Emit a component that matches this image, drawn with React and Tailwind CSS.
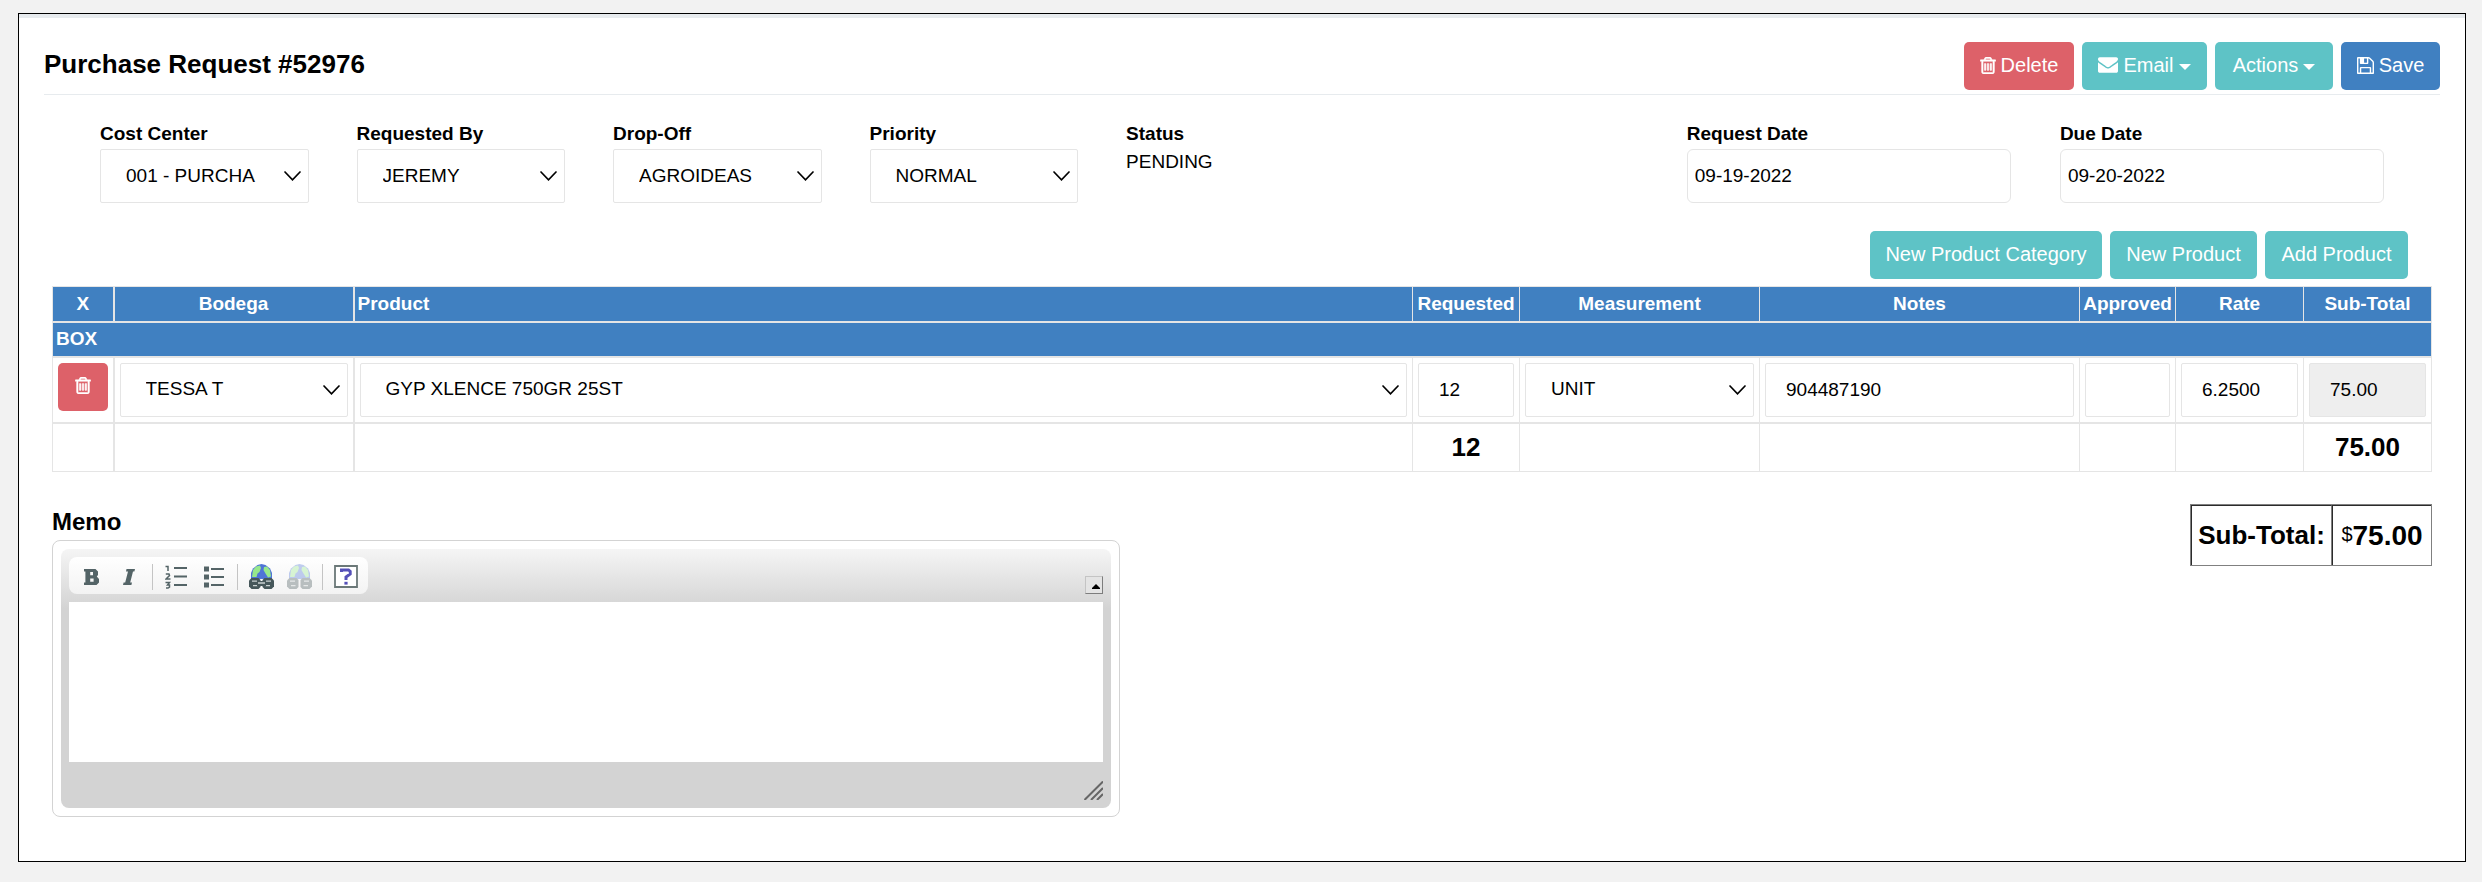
const input =
  "h-[54px] w-full min-w-0 rounded-[2px] border border-[#e5e5e5] bg-white px-[20px] text-[19px] text-black outline-none";
const button =
  "flex h-12 items-center justify-center rounded-[5px] pb-[2px] text-[20px] leading-6 text-white whitespace-nowrap";

function TrashIcon() {
  return (
    <svg viewBox="192 128 1408 1536" className="h-[17px] w-4" fill="currentColor" stroke="currentColor" strokeWidth="50" aria-hidden="true">
      <path d="M704 736v576q0 14-9 23t-23 9h-64q-14 0-23-9t-9-23v-576q0-14 9-23t23-9h64q14 0 23 9t9 23zm256 0v576q0 14-9 23t-23 9h-64q-14 0-23-9t-9-23v-576q0-14 9-23t23-9h64q14 0 23 9t9 23zm256 0v576q0 14-9 23t-23 9h-64q-14 0-23-9t-9-23v-576q0-14 9-23t23-9h64q14 0 23 9t9 23zm128 724v-948h-896v948q0 22 7 40.5t14.5 27 10.5 8.5h832q3 0 10.5-8.5t14.5-27 7-40.5zm-672-1076h448l-48-117q-7-9-17-11h-317q-10 2-17 11zm928 32v64q0 14-9 23t-23 9h-96v948q0 83-47 143.5t-113 60.5h-832q-66 0-113-58.5t-47-141.5v-952h-96q-14 0-23-9t-9-23v-64q0-14 9-23t23-9h309l70-167q15-37 54-63t79-26h320q40 0 79 26t54 63l70 167h309q14 0 23 9t9 23z" />
    </svg>
  );
}

function MailIcon() {
  return (
    <svg viewBox="0 256 1792 1408" className="h-4 w-5" fill="currentColor" aria-hidden="true">
      <path d="M1792 710v794q0 66-47 113t-113 47h-1472q-66 0-113-47t-47-113v-794q44 49 101 87 362 246 497 345 57 42 92.5 65.5t94.5 48 110 24.5h2q51 0 110-24.5t94.5-48 92.5-65.5q170-123 498-345 57-39 100-87zm0-294q0 79-49 151t-122 123q-376 261-468 325-10 7-42.5 31t-54 38.5-52 32.5-57.5 27-50 9h-2q-23 0-50-9t-57.5-27-52-32.5-54-38.5-42.5-31q-91-64-262-182.5t-205-142.5q-62-42-117-115.5t-55-136.5q0-78 41.5-130t118.5-52h1472q65 0 112.5 47t47.5 113z" />
    </svg>
  );
}

function SaveIcon() {
  return (
    <svg viewBox="128 128 1536 1536" className="size-[17px]" fill="currentColor" aria-hidden="true">
      <path d="M512 1536h768v-384h-768v384zm896 0h128v-896q0-14-10-38.5t-20-34.5l-281-281q-10-10-34-20t-39-10v416q0 40-28 68t-68 28h-576q-40 0-68-28t-28-68v-416h-128v1280h128v-416q0-40 28-68t68-28h832q40 0 68 28t28 68v416zm-384-928v-320q0-13-9.5-22.5t-22.5-9.5h-192q-13 0-22.5 9.5t-9.5 22.5v320q0 13 9.5 22.5t22.5 9.5h192q13 0 22.5-9.5t9.5-22.5zm640 32v928q0 40-28 68t-68 28h-1344q-40 0-68-28t-28-68v-1344q0-40 28-68t68-28h928q40 0 88 20t76 48l280 280q28 28 48 76t20 88z" />
    </svg>
  );
}

function Caret() {
  return (
    <svg viewBox="0 0 12 6" className="mt-1 h-[6px] w-3" fill="currentColor" aria-hidden="true">
      <path d="M0 0H12L6 6Z" />
    </svg>
  );
}

function Select({ id, label, value }) {
  return (
    <div className="grid items-center">
      <select
        id={id}
        aria-label={label}
        defaultValue={value}
        className="col-start-1 row-start-1 h-[54px] w-full min-w-0 appearance-none rounded-[2px] border border-[#e5e5e5] bg-white pr-10 pl-[25px] text-[19px] text-black"
      >
        <option>{value}</option>
      </select>
      <svg viewBox="0 0 17 10" className="pointer-events-none col-start-1 row-start-1 mr-[8px] h-[10px] w-[17px] justify-self-end" fill="none" stroke="#000" strokeWidth="1.7" strokeLinecap="round" aria-hidden="true">
        <path d="M1 1L8.500 8.800L16 1" />
      </svg>
    </div>
  );
}

function SelectField({ id, label, value }) {
  return (
    <div className="px-6">
      <label htmlFor={id} className="block pb-[2px] text-[19px] leading-[26px] font-bold">{label}</label>
      <Select id={id} value={value} />
    </div>
  );
}

function DateField({ id, label, value }) {
  return (
    <div className="pr-6 pl-[25px]">
      <label htmlFor={id} className="block pb-[2px] text-[19px] leading-[26px] font-bold">{label}</label>
      <input id={id} defaultValue={value} className="h-[54px] w-full min-w-0 rounded-md border border-[#e5e5e5] bg-white px-[7px] text-[19px] text-black" />
    </div>
  );
}

const tool = "flex h-7 w-[38px] items-center justify-center";

function Separator() {
  return <span className="mx-1 h-[26px] w-px bg-[#c4c4c4]" />;
}

function Globe({ broken }) {
  return (
    <svg viewBox="0 0 25 25" className={broken ? "size-[25px] opacity-35" : "size-[25px]"} aria-hidden="true">
      <path d="M2 15V9L4 4.500L8.500 1L12.500 0L16.500 1L21 4.500L23 9V15Z" fill="#4f74d6" />
      <path d="M4 6L7 2.500L11 1.500L12 4L10.500 8L8.500 9.500L7.500 13H3Z" fill="#97e88c" />
      <path d="M15 3L18 2.500L21 6L22 12.500L19 13.500L16.500 9.500L14.500 6Z" fill="#97e88c" />
      <path d="M2.500 14H9.500L11.500 16V23L9.500 25H2.500L0 22.500V16.500Z" fill="#46575a" />
      <path d="M22.500 14H15.500L13.500 16V23L15.500 25H22.500L25 22.500V16.500Z" fill="#46575a" />
      <path d="M3 17.200H8M17 17.200H22M4 21.700H8.500M16.500 21.700H21" stroke="#c9d1d1" strokeWidth="1.200" />
      {!broken && <path d="M8 19.500H17" stroke="#46575a" strokeWidth="5" />}
      {!broken && <path d="M9 19H16" stroke="#dfe5e5" strokeWidth="1.300" />}
    </svg>
  );
}

function Editor() {
  return (
    <div className="w-full max-w-[1068px] rounded-lg border border-[#d3d3d3] p-2">
      <div className="rounded-lg bg-[#d3d3d3] bg-[linear-gradient(#f5f5f5,#d3d3d3_60px)] p-2">
        <div className="flex items-end justify-between pb-2">
          <div className="flex h-[37px] items-center rounded-lg bg-linear-to-b from-white to-[#f3f3f3] px-[3px] pt-[2px]">
            <button type="button" aria-label="Bold" className={tool}>
              <svg viewBox="0 0 15 16" className="h-4 w-[15px]" fill="#546467" fillRule="evenodd" aria-hidden="true">
                <path d="M0 0H11.500L14 2.500V6L12.800 7.600L15 10V13.500L12.500 16H0V13.400H1.400V2.600H0ZM6.200 3V6.200H9V3ZM6.200 9.400V12.800H9.600V9.400Z" />
              </svg>
            </button>
            <button type="button" aria-label="Italic" className={tool}>
              <svg viewBox="0 0 12 16" className="h-4 w-3" fill="#546467" aria-hidden="true">
                <path d="M3.500 0H12L11.400 2.400H10L7.200 13.600H9L8.400 16H0L.6 13.600H2.200L5 2.400H3Z" />
              </svg>
            </button>
            <Separator />
            <button type="button" aria-label="Numbered list" className={tool}>
              <svg viewBox="0 0 22 24" className="h-6 w-[22px]" fill="none" stroke="#546467" aria-hidden="true">
                <path d="M9 3H22M9 11.500H22M9 20H22" strokeWidth="2" />
                <path d="M.5 1.500H3V6M.8 9H4L4.500 10.500L1 14H5.500M.5 17.500H4.500L2.500 20H4.500V22L3 23H1" strokeWidth="1.500" />
              </svg>
            </button>
            <button type="button" aria-label="Bulleted list" className={tool}>
              <svg viewBox="0 0 20 22" className="h-[22px] w-5" fill="#546467" aria-hidden="true">
                <path d="M0 .5H5V5.500H0ZM0 8.500H5V13.500H0ZM0 16.500H5V21.500H0ZM7 2H20V4H7ZM7 10H20V12H7ZM7 18H20V20H7Z" />
              </svg>
            </button>
            <Separator />
            <button type="button" aria-label="Link" className={tool}><Globe /></button>
            <button type="button" aria-label="Unlink" className={tool}><Globe broken /></button>
            <Separator />
            <button type="button" aria-label="About" className={tool}>
              <svg viewBox="0 0 24 23" className="h-[23px] w-6" fill="none" aria-hidden="true">
                <path d="M1 1H23V22H1Z" fill="#fff" stroke="#6b7878" strokeWidth="1.800" />
                <path d="M7.500 7V5H14.500L16.200 6.500V9L12 12V15" stroke="#5550b8" strokeWidth="3" />
                <path d="M10.400 16.800H13.600V19.600H10.400Z" fill="#5550b8" />
              </svg>
            </button>
          </div>
          <button type="button" aria-label="Collapse toolbar" className="flex size-[18px] items-end justify-end border border-t-[#c4c4c4] border-r-[#7d7d7d] border-b-[#7d7d7d] border-l-[#c4c4c4] bg-[#e4e4e4] pr-[2px] pb-1">
            <svg viewBox="0 0 8 5" className="h-[5px] w-2" fill="#000" aria-hidden="true"><path d="M4 0L8 4V5H0V4Z" /></svg>
          </button>
        </div>
        <textarea id="memo" className="block h-40 w-full resize-none bg-white p-3 text-[19px] outline-none" />
        <div className="flex h-[38px] items-end justify-end">
          <svg viewBox="0 0 19 19" className="size-[19px]" fill="none" stroke="#666" strokeWidth="2" aria-hidden="true">
            <path d="M.5 19L19 .5M7 19L19 7M13 19L19 13" />
          </svg>
        </div>
      </div>
    </div>
  );
}

const head = "border border-b-2 border-[#e5e5e5] px-0 text-center";
const cell = "border border-y-2 border-[#e5e5e5] p-[5px] align-top";

export default function App() {
  return (
    <div className="min-h-screen bg-[#f2f2f2] pt-[13px] pr-4 pb-4 pl-[18px] font-['Liberation_Sans',Arial,sans-serif] text-[19px] text-black">
      <main className="border border-black bg-white">
        <div className="h-1 bg-[#e7ebee]" />
        <header className="mx-[25px] flex justify-between border-b border-[#e7ebee] pt-6 pb-1">
          <h1 className="pt-[6px] text-[26px] leading-8 font-bold">Purchase Request #52976</h1>
          <div className="flex gap-2">
            <button type="button" className={`${button} w-[110px] gap-[5px] bg-[#dd6169]`}><TrashIcon />Delete</button>
            <button type="button" className={`${button} w-[125px] gap-[5px] bg-[#5ec3c6]`}><MailIcon />Email<Caret /></button>
            <button type="button" className={`${button} w-[118px] gap-[5px] bg-[#5ec3c6]`}>Actions<Caret /></button>
            <button type="button" className={`${button} w-[99px] gap-[5px] bg-[#4080c1]`}><SaveIcon />Save</button>
          </div>
        </header>

        <section className="mx-[57px] grid grid-cols-[11fr_11fr_11fr_11fr_24fr_16fr_16fr] pt-[26px]">
          <SelectField id="cost-center" label="Cost Center" value="001 - PURCHA" />
          <SelectField id="requested-by" label="Requested By" value="JEREMY" />
          <SelectField id="drop-off" label="Drop-Off" value="AGROIDEAS" />
          <SelectField id="priority" label="Priority" value="NORMAL" />
          <div className="px-6">
            <p className="leading-[26px] font-bold">Status</p>
            <p className="leading-[30px]">PENDING</p>
          </div>
          <DateField id="request-date" label="Request Date" value="09-19-2022" />
          <DateField id="due-date" label="Due Date" value="09-20-2022" />
        </section>

        <div className="mr-[57px] flex justify-end gap-2 pt-7 pb-[7px]">
          <button type="button" className={`${button} w-[232px] bg-[#5ec3c6]`}>New Product Category</button>
          <button type="button" className={`${button} w-[147px] bg-[#5ec3c6]`}>New Product</button>
          <button type="button" className={`${button} w-[143px] bg-[#5ec3c6]`}>Add Product</button>
        </div>

        <div className="mx-[33px]">
          <table className="w-full table-fixed border-collapse">
            <colgroup>
              <col className="w-[61px]" />
              <col className="w-[240px]" />
              <col />
              <col className="w-[107px]" />
              <col className="w-[240px]" />
              <col className="w-[320px]" />
              <col className="w-[96px]" />
              <col className="w-[128px]" />
              <col className="w-[128px]" />
            </colgroup>
            <thead className="bg-[#4080c1] text-white">
              <tr className="h-[35px]">
                <th className={`${head} border-r-2`}>X</th>
                <th className={`${head} border-r-2`}>Bodega</th>
                <th className="border border-b-2 border-[#e5e5e5] pl-[3px] text-left">Product</th>
                <th className={head}>Requested</th>
                <th className={head}>Measurement</th>
                <th className={head}>Notes</th>
                <th className={head}>Approved</th>
                <th className={head}>Rate</th>
                <th className={head}>Sub-Total</th>
              </tr>
            </thead>
            <tbody>
              <tr className="h-[35px] bg-[#4080c1] text-white">
                <th colSpan={9} className="border border-y-2 border-[#e5e5e5] pl-[3px] text-left">BOX</th>
              </tr>
              <tr>
                <td className={`${cell} border-r-2`}>
                  <button type="button" aria-label="Remove row" className={`${button} w-full bg-[#dd6169]`}><TrashIcon /></button>
                </td>
                <td className={`${cell} border-r-2`}><Select label="Bodega" value="TESSA T" /></td>
                <td className={cell}><Select label="Product" value="GYP XLENCE 750GR 25ST" /></td>
                <td className={cell}><input aria-label="Requested" defaultValue="12" className={input} /></td>
                <td className={cell}><Select label="Measurement" value="UNIT" /></td>
                <td className={cell}><input aria-label="Notes" defaultValue="904487190" className={input} /></td>
                <td className={cell}><input aria-label="Approved" className={input} /></td>
                <td className={cell}><input aria-label="Rate" defaultValue="6.2500" className={input} /></td>
                <td className={cell}><input aria-label="Sub-Total" readOnly value="75.00" className="h-[54px] w-full min-w-0 rounded-[2px] border border-[#e5e5e5] bg-[#eee] px-[20px] text-[19px] text-black outline-none" /></td>
              </tr>
            </tbody>
            <tfoot className="text-[26px] leading-8 font-bold">
              <tr className="h-[49px]">
                <td className="border border-r-2 border-[#e5e5e5]" />
                <td className="border border-r-2 border-[#e5e5e5]" />
                <td className="border border-[#e5e5e5]" />
                <td className="border border-[#e5e5e5] text-center">12</td>
                <td className="border border-[#e5e5e5]" />
                <td className="border border-[#e5e5e5]" />
                <td className="border border-[#e5e5e5]" />
                <td className="border border-[#e5e5e5]" />
                <td className="border border-[#e5e5e5] text-center">75.00</td>
              </tr>
            </tfoot>
          </table>

          <div className="flex items-start justify-between gap-8 pt-8 pb-11">
            <div className="flex-1">
              <label htmlFor="memo" className="block pt-[2px] pb-[2px] text-[24px] leading-8 font-bold">Memo</label>
              <Editor />
            </div>
            <table className="w-[242px] border-separate border-spacing-0 border border-[#808080] text-[26px] font-bold">
              <tbody>
                <tr className="h-[60px]">
                  <th className="w-[141px] border-t border-r border-l border-t-[#2b2b2b] border-r-[#808080] border-l-[#2b2b2b] p-0 text-center">Sub-Total:</th>
                  <td className="border-t border-l border-[#2b2b2b] p-0 text-center text-[28px]">
                    <span className="align-[4px] text-[20px] font-normal">$</span>75.00
                  </td>
                </tr>
              </tbody>
            </table>
          </div>
        </div>
      </main>
    </div>
  );
}
